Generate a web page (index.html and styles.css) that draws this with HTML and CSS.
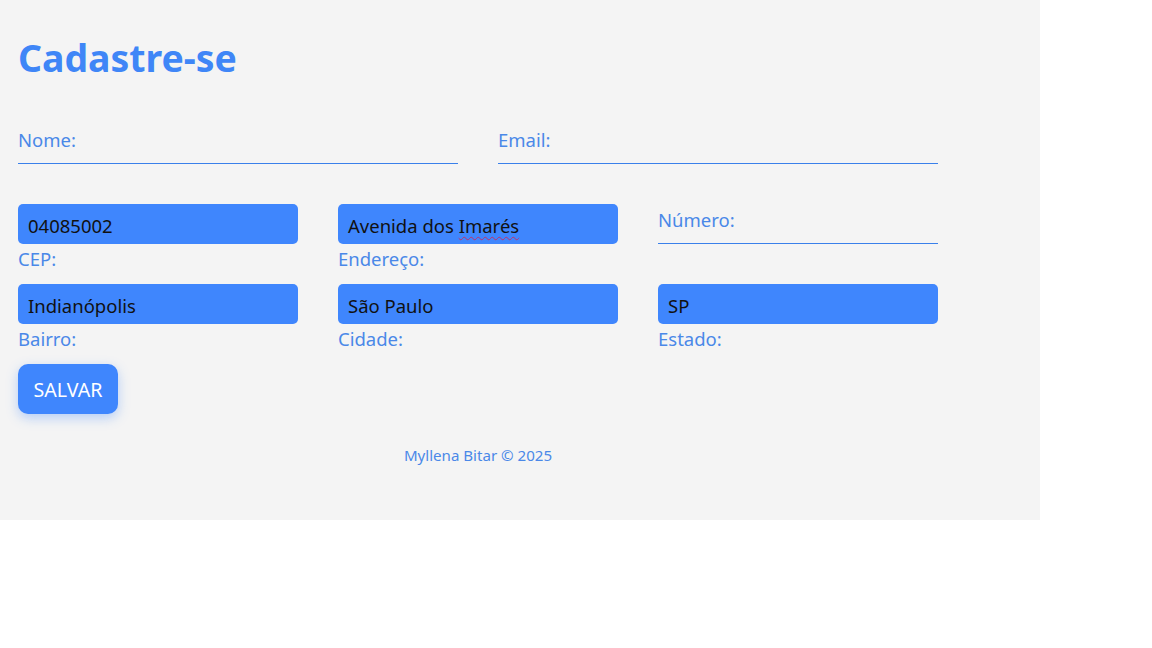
FILE: index.html
```html
<!DOCTYPE html>
<html lang="pt-BR">
<head>
<meta charset="utf-8">
<title>Cadastre-se</title>
<link rel="stylesheet" href="styles.css">
</head>
<body>
<main class="page">
  <h1 class="title">Cadastre-se</h1>
  <form class="form">
    <div class="row row-2">
      <div class="field empty">
        <input class="input" type="text" id="nome">
        <label class="label" for="nome">Nome:</label>
      </div>
      <div class="field empty">
        <input class="input" type="email" id="email">
        <label class="label" for="email">Email:</label>
      </div>
    </div>
    <div class="row row-3">
      <div class="field filled">
        <input class="input" type="text" id="cep" value="04085002">
        <label class="label" for="cep">CEP:</label>
      </div>
      <div class="field filled">
        <div class="input fake" id="endereco">Avenida dos <span class="typo">Imarés</span></div>
        <label class="label" for="endereco">Endereço:</label>
      </div>
      <div class="field empty">
        <input class="input" type="text" id="numero">
        <label class="label" for="numero">Número:</label>
      </div>
    </div>
    <div class="row row-3">
      <div class="field filled">
        <input class="input" type="text" id="bairro" value="Indianópolis">
        <label class="label" for="bairro">Bairro:</label>
      </div>
      <div class="field filled">
        <input class="input" type="text" id="cidade" value="São Paulo">
        <label class="label" for="cidade">Cidade:</label>
      </div>
      <div class="field filled">
        <input class="input" type="text" id="estado" value="SP">
        <label class="label" for="estado">Estado:</label>
      </div>
    </div>
    <div class="actions">
      <button class="btn" type="button">SALVAR</button>
    </div>
  </form>
  <footer class="footer">Myllena Bitar © 2025</footer>
</main>
</body>
</html>
```

FILE: styles.css
```css
* { box-sizing: border-box; }

html, body {
  margin: 0;
  padding: 0;
  background: #ffffff;
}

body {
  font-family: "Noto Sans", "Open Sans", sans-serif;
  color: #4a88e8;
}

.page {
  width: 1040px;
  background: #f4f4f4;
  padding: 34px 18px 55px;
}

.title {
  margin: 0;
  font-size: 37.4px;
  line-height: 48px;
  font-weight: 700;
  color: #3f86f7;
}

.form {
  width: 920px;
  margin-top: 42px;
  display: flex;
  flex-direction: column;
  gap: 16px;
}

.row {
  display: grid;
  column-gap: 40px;
}

.row-2 { grid-template-columns: 1fr 1fr; }
.row-3 { grid-template-columns: 1fr 1fr 1fr; }

.field {
  position: relative;
  height: 64px;
}

.input {
  -webkit-appearance: none;
  appearance: none;
  display: block;
  width: 100%;
  height: 40px;
  border: 0;
  outline: none;
  margin: 0;
  font-family: "Noto Sans", "Open Sans", sans-serif;
  font-size: 18.5px;
  color: #111111;
}

.fake {
  line-height: 40px;
  white-space: nowrap;
}

.filled .input {
  background: #3f86fd;
  border-radius: 5px;
  padding: 2px 10px 0;
}

.empty .input {
  background: transparent;
  border-radius: 0;
  padding: 0;
}

.empty::after {
  content: "";
  position: absolute;
  left: 0;
  right: 0;
  top: 39px;
  height: 1px;
  background: #3a80ea;
}

.label {
  display: block;
  font-size: 18.5px;
  line-height: 24px;
  color: #4a88e8;
}

.filled .label {
  margin-top: 3px;
}

.empty .label {
  position: absolute;
  left: 0;
  top: 3px;
  line-height: 26px;
  pointer-events: none;
}

.typo {
  text-decoration: underline wavy #c0306a;
  text-decoration-thickness: 1px;
  text-underline-offset: 3px;
}

.actions {
  display: flex;
}

.btn {
  width: 100px;
  height: 50px;
  border: none;
  border-radius: 10px;
  background: #3f86fd;
  color: #ffffff;
  font-family: "Noto Sans", "Open Sans", sans-serif;
  font-size: 19.6px;
  padding: 0;
  box-shadow: 0 4px 12px rgba(63, 134, 253, 0.35);
  cursor: pointer;
}

.footer {
  width: 920px;
  margin-top: 31px;
  text-align: center;
  font-size: 15.1px;
  line-height: 20px;
  color: #4a88e8;
}
```
